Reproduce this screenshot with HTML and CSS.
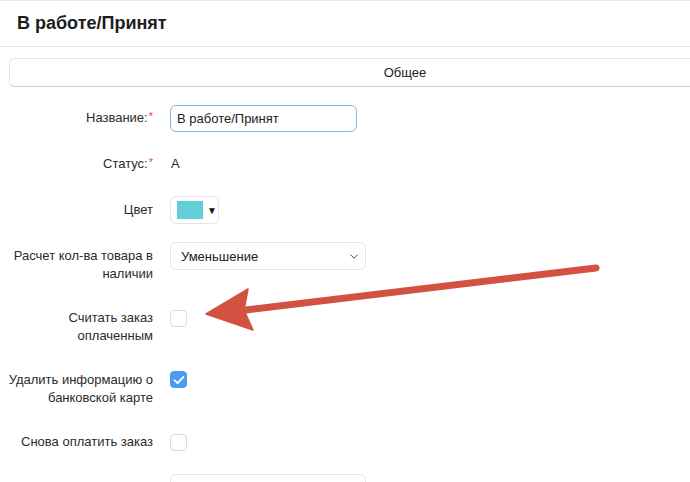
FILE: index.html
```html
<!DOCTYPE html>
<html lang="ru">
<head>
    <meta charset="UTF-8">
    <meta name="viewport" content="width=device-width, initial-scale=1.0">
    <title>В работе/Принят</title>
    <link rel="stylesheet" href="styles.css">
</head>
<body>
    <div class="page">
        <div class="header">
            <h1 class="title">В работе/Принят</h1>
        </div>

        <div class="tabs">
            <button class="tab">Общее</button>
        </div>

        <form class="form">
            <div class="row">
                <label class="label">Название:<span class="req">*</span></label>
                <div class="control">
                    <input type="text" class="input focused" value="В работе/Принят">
                </div>
            </div>

            <div class="row">
                <label class="label">Статус:<span class="req">*</span></label>
                <div class="control">
                    <span class="static">A</span>
                </div>
            </div>

            <div class="row">
                <label class="label">Цвет</label>
                <div class="control">
                    <button type="button" class="color-btn">
                        <span class="swatch"></span>
                        <span class="caret">&#9660;</span>
                    </button>
                </div>
            </div>

            <div class="row">
                <label class="label">Расчет кол-ва товара в наличии</label>
                <div class="control">
                    <div class="select">
                        <span>Уменьшение</span>
                        <svg class="chevron" width="8" height="5" viewBox="0 0 8 5">
                            <path d="M0.5 0.7l3.5 3.5 3.5-3.5" fill="none" stroke="#444" stroke-width="1"/>
                        </svg>
                    </div>
                </div>
            </div>

            <div class="row">
                <label class="label">Считать заказ оплаченным</label>
                <div class="control">
                    <span class="checkbox"></span>
                </div>
            </div>

            <div class="row">
                <label class="label">Удалить информацию о банковской карте</label>
                <div class="control">
                    <span class="checkbox checked">
                        <svg width="12" height="10" viewBox="0 0 12 10">
                            <path d="M1.5 5.2l3 3 6-6.4" fill="none" stroke="#fff" stroke-width="1.8" stroke-linecap="round" stroke-linejoin="round"/>
                        </svg>
                    </span>
                </div>
            </div>

            <div class="row">
                <label class="label">Снова оплатить заказ</label>
                <div class="control">
                    <span class="checkbox"></span>
                </div>
            </div>

            <div class="row">
                <label class="label"></label>
                <div class="control">
                    <div class="input wide"></div>
                </div>
            </div>
        </form>

        <!-- annotation arrow drawn over the form -->
        <svg class="arrow" width="690" height="482" viewBox="0 0 690 482">
            <path d="M596 268 L246 310" stroke="#d35141" stroke-width="7" stroke-linecap="round" fill="none"/>
            <path d="M206 314 L248 289 L244 310 L253 330 Z" fill="#d35141" stroke="#d35141" stroke-width="1.5" stroke-linejoin="round"/>
        </svg>
    </div>
</body>
</html>
```

FILE: styles.css
```css
html, body {
    margin: 0;
    overflow: hidden;
}

body {
    font-family: "Liberation Sans", Arial, sans-serif;
    font-size: 13px;
    color: #2b2b2b;
    background-color: #fff;
}

.page {
    position: relative;
    width: 810px;
    height: 482px;
    border-top: 1px solid #e6e9f0;
}

.header {
    height: 45px;
    display: flex;
    align-items: center;
    padding-left: 17px;
    border-bottom: 1px solid #e2e5ec;
}

.title {
    margin: 0;
    font-size: 18px;
    font-weight: bold;
    color: #1d1d1d;
}

.tabs {
    padding: 11px 9px 0;
}

.tab {
    display: block;
    width: 100%;
    height: 29px;
    background-color: #fff;
    border: 1px solid #e2e5ec;
    border-bottom-color: #c9ced8;
    border-radius: 6px;
    font-family: inherit;
    font-size: 13px;
    color: #222;
}

.form {
    padding-top: 17px;
}

.row {
    display: flex;
    align-items: flex-start;
    margin-bottom: 18px;
}

.label {
    width: 148px;
    padding: 5px 0 3px 5px;
    line-height: 18px;
    text-align: right;
    flex-shrink: 0;
}

.req {
    color: #e0464c;
    font-size: 11px;
    position: relative;
    top: -2px;
    margin-left: 1px;
}

.control {
    margin-left: 17px;
    min-height: 28px;
    display: flex;
    align-items: flex-start;
}

.input {
    box-sizing: border-box;
    width: 187px;
    height: 27px;
    padding: 0 6px;
    border: 1px solid #e1e5ee;
    border-radius: 6px;
    font-family: inherit;
    font-size: 13px;
    color: #222;
    outline: none;
}

.input.focused {
    border-color: #86b6ef;
    margin-top: 1px;
}

.input.wide {
    width: 196px;
    height: 30px;
}

.static {
    line-height: 28px;
    padding-left: 1px;
}

.color-btn {
    box-sizing: border-box;
    width: 49px;
    height: 28px;
    display: flex;
    align-items: center;
    padding: 0 0 0 6px;
    background-color: #fff;
    border: 1px solid #e1e5ee;
    border-radius: 6px;
}

.swatch {
    width: 26px;
    height: 18px;
    background-color: #63cdd9;
}

.caret {
    font-size: 10px;
    margin-left: 4px;
    color: #111;
}

.select {
    box-sizing: border-box;
    width: 196px;
    height: 28px;
    display: flex;
    align-items: center;
    justify-content: space-between;
    padding: 0 7px 0 10px;
    border: 1px solid #e1e5ee;
    border-radius: 6px;
    color: #222;
}

.checkbox {
    box-sizing: border-box;
    width: 17px;
    height: 17px;
    margin-top: 6px;
    border: 1px solid #d6dce7;
    border-radius: 4px;
    background-color: #fff;
    display: flex;
    align-items: center;
    justify-content: center;
}

.checkbox.checked {
    margin-top: 5px;
    background-color: #4a9bf3;
    border-color: #4a9bf3;
}

.arrow {
    position: absolute;
    left: 0;
    top: -1px;
    pointer-events: none;
}
```
